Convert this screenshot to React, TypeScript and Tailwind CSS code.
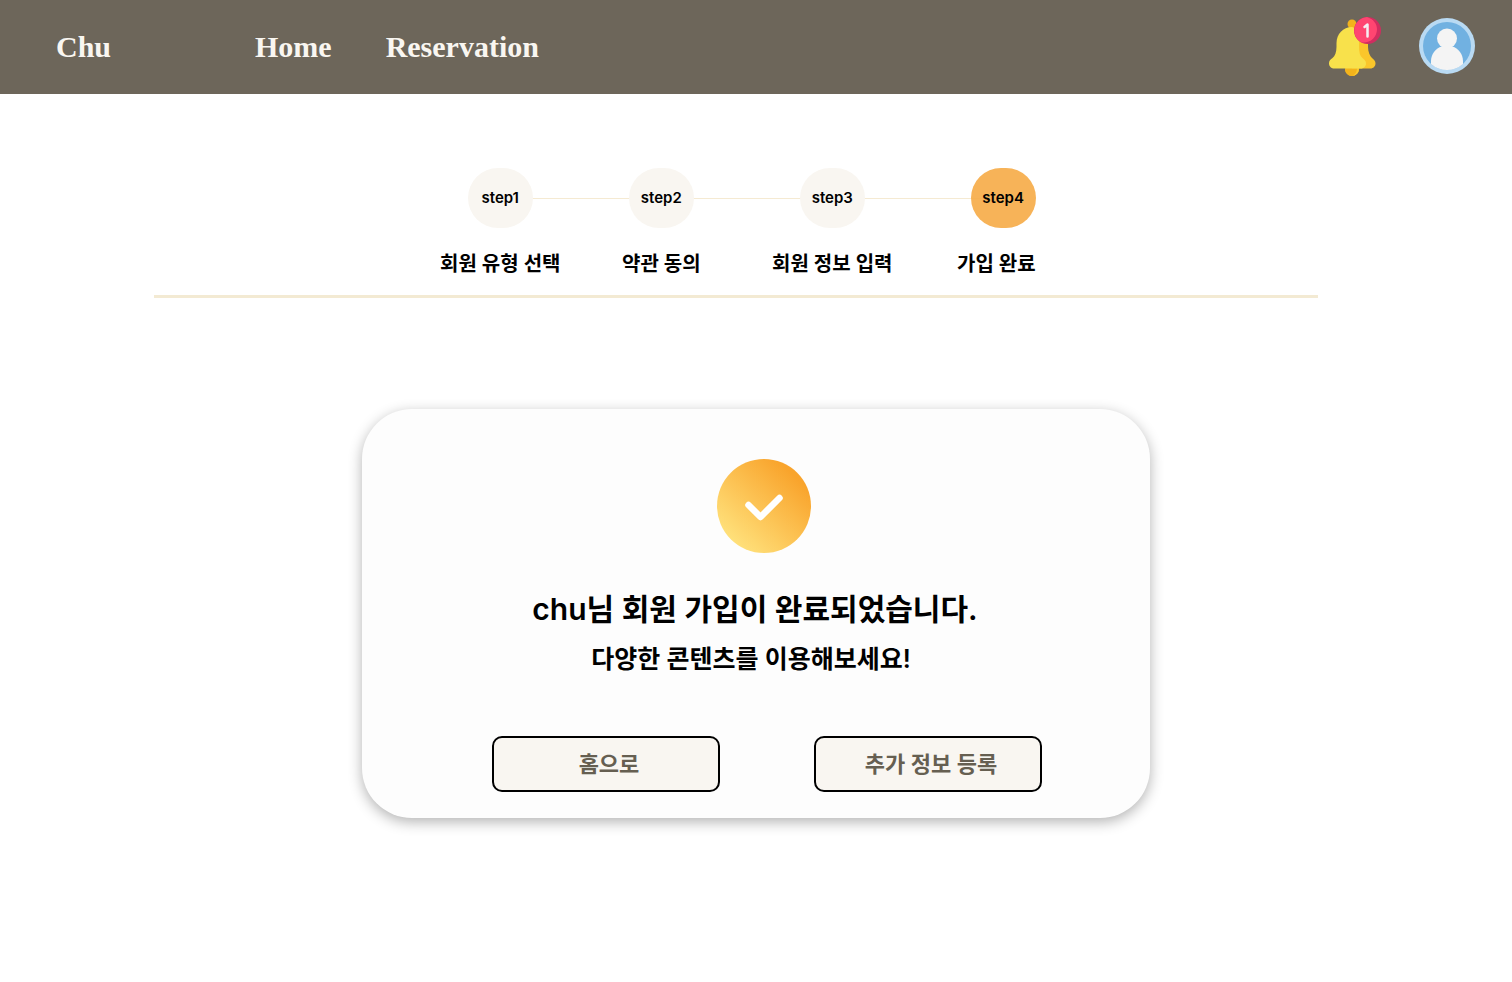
const steps = [
  { id: "step1", label: "회원 유형 선택" },
  { id: "step2", label: "약관 동의" },
  { id: "step3", label: "회원 정보 입력" },
  { id: "step4", label: "가입 완료", current: true },
];

function BellIcon() {
  return (
    <svg width="54" height="62" viewBox="0 0 54 62" aria-hidden="true">
      <circle cx="24" cy="9" r="4.5" fill="#F3B31C" />
      <circle cx="24" cy="54" r="7" fill="#F3B31C" />
      <path d="M17 54a7 7 0 0 0 10 6.300c2-1.500 3-4 3-6.300z" fill="#F3B31C" />
      <path d="M29 53h2a7 7 0 0 1-7 8c3-1 5-4 5-8z" fill="#FBC92E" />
      <path d="M24 12C33 12 40 19 40 28v4c0 5 2 9 4 11 2 1.500 3.500 3 3.500 5.500 0 2.800-2.200 5-5 5H24z" fill="#FAC62B" />
      <path d="M24 12C15 12 8.500 19 8.500 28v4c0 5-1.500 9-4 11C2 44.500 1 46 1 48.500c0 2.800 2.200 5 5 5h27c2.800 0 5-2.200 5-5 0-2.500-1.500-4-3.500-5.500-2.500-2-3.500-6-3.500-11v-4C31 19 29 14 24 12z" fill="#F8E14B" />
      <circle cx="39.500" cy="15.500" r="13.500" fill="#D02D60" />
      <path d="M39 2a13.500 13.500 0 0 0-5.500 25.500c8.500 1 15.500-5 15.500-13.500 0-5-3.500-10-10-12z" fill="#FF4571" />
      <path d="M36.500 12l3-2.500V21.500" fill="none" stroke="#F5EEF2" strokeWidth="2.500" strokeLinecap="round" strokeLinejoin="round" />
    </svg>
  );
}

function AvatarIcon() {
  return (
    <svg width="56" height="56" viewBox="0 0 56 56" aria-hidden="true">
      <circle cx="28" cy="28" r="28" fill="#B9DAF3" />
      <circle cx="28" cy="28" r="24" fill="#71B1E1" />
      <circle cx="28" cy="20.500" r="10" fill="#F4F4F4" />
      <path d="M12 45.900V43c0-7 5-13 10.500-14.500h11c5.500 1.500 10.500 7.500 10.500 14.500v2.900a24 24 0 0 1-32 0z" fill="#F4F4F4" />
    </svg>
  );
}

function CheckBadge() {
  return (
    <svg width="94" height="94" viewBox="0 0 94 94" aria-hidden="true">
      <defs>
        <linearGradient id="badge" x1="0.2" y1="0.9" x2="0.85" y2="0.2">
          <stop offset="0" stopColor="#FFE07A" />
          <stop offset="1" stopColor="#F9A42C" />
        </linearGradient>
      </defs>
      <circle cx="47" cy="47" r="47" fill="url(#badge)" />
      <path d="M31.500 46L43.500 58L62.500 39" fill="none" stroke="#fff" strokeWidth="6.500" strokeLinecap="round" strokeLinejoin="round" />
    </svg>
  );
}

const buttonClass =
  "h-14 flex-1 rounded-[10px] border-2 border-black bg-[#F9F6F1] pl-1.5 text-[22px] font-semibold text-[#665F51]";

export default function App() {
  return (
    <div className="min-h-screen bg-white font-['Inter','Noto_Sans_CJK_KR',sans-serif] text-black">
      <header className="flex h-[94px] items-center bg-[#6D665A] pr-[37px] pb-0.5 pl-14 font-['Liberation_Serif',serif] text-[30px] font-bold text-[#F9F6F1]">
        <a href="#" className="w-[199px]">Chu</a>
        <nav className="flex gap-[54px]">
          <a href="#home">Home</a>
          <a href="#reservation">Reservation</a>
        </nav>
        <div className="ml-auto flex items-center gap-[37px]">
          <button type="button" aria-label="알림 1개">
            <BellIcon />
          </button>
          <button type="button" aria-label="내 프로필">
            <AvatarIcon />
          </button>
        </div>
      </header>

      <main>
        <section className="mr-[194px] ml-[154px] flex justify-center border-b-[3px] border-[#F3EAD3] pt-[74px] pb-[15px] pl-[3px]">
          <ol className="relative grid grid-cols-[182px_150px_185px_78px]">
            <li aria-hidden="true" className="absolute top-[30px] right-[46px] left-[60px] h-px bg-[#F5EAD2]" />
            {steps.map((step) => (
              <li
                key={step.id}
                aria-current={step.current ? "step" : undefined}
                className={`relative flex w-fit flex-col gap-[21px] ${step.current ? "items-end" : "items-center"}`}
              >
                <span
                  className={`flex h-[60px] w-[65px] items-center justify-center rounded-[30px] text-[15px] font-semibold ${
                    step.current ? "bg-[#F6AB46]/90" : "bg-[#F9F6F1]"
                  }`}
                >
                  {step.id}
                </span>
                <span className="text-[20px] leading-[31px] font-semibold whitespace-nowrap">{step.label}</span>
              </li>
            ))}
          </ol>
        </section>

        <section className="mx-auto mt-[111px] mb-16 flex max-w-[788px] flex-col items-center rounded-[50px] bg-[#FDFDFD] pt-[50px] pb-[26px] shadow-[0_4px_14px_rgba(0,0,0,0.3)]">
          <div className="pl-4">
            <CheckBadge />
          </div>
          <div className="mt-[34px] text-center font-semibold">
            <h1 className="pr-0.5 text-[30px] leading-[44px]">chu님 회원 가입이 완료되었습니다.</h1>
            <p className="mt-2 pr-2.5 text-[25px] leading-[40px]">다양한 콘텐츠를 이용해보세요!</p>
          </div>
          <div className="mt-[57px] flex w-full gap-[94px] pr-[108px] pl-[130px]">
            <button type="button" className={buttonClass}>홈으로</button>
            <button type="button" className={buttonClass}>추가 정보 등록</button>
          </div>
        </section>
      </main>
    </div>
  );
}
